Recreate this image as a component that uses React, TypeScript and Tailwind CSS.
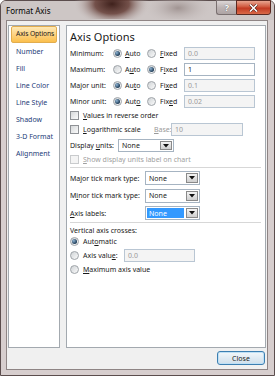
import React from "react";

function Radio({ checked = false }: { checked?: boolean }) {
  return (
    <div className="w-[9px] h-[9px] shrink-0 rounded-full border border-[#9ea3a8] bg-[linear-gradient(135deg,#cfd3d6,#fbfbfb)] flex items-center justify-center">
      {checked && (
        <div className="w-[5px] h-[5px] rounded-full bg-[radial-gradient(circle_at_35%_35%,#8fb4d4,#1c3a55_70%)]" />
      )}
    </div>
  );
}

function Check({ disabled = false }: { disabled?: boolean }) {
  return (
    <div
      className={
        disabled
          ? "w-[9px] h-[9px] shrink-0 border border-[#c9cbcd] bg-[#f4f4f4]"
          : "w-[9px] h-[9px] shrink-0 border border-[#8f9296] bg-[linear-gradient(135deg,#d6d8da,#fbfbfb)]"
      }
    />
  );
}

function TextBox({ value, disabled = false, w }: { value: string; disabled?: boolean; w: string }) {
  return (
    <div
      className={
        (disabled
          ? "bg-[#f4f4f4] text-[#9a9a9a] border-[#b9c6d3] "
          : "bg-white text-[#1a1a1a] border-[#a6b4c2] ") +
        w +
        " h-[13px] shrink-0 border flex items-center pl-[3px]"
      }
    >
      {value}
    </div>
  );
}

function Select({ w, h, highlight = false }: { w: string; h: string; highlight?: boolean }) {
  return (
    <div className={w + " " + h + " shrink-0 flex border border-[#a6b4c2] bg-white"}>
      <div
        className={
          highlight
            ? "flex-1 flex items-center pl-[2px] m-[1px] bg-[#3399ff] text-white"
            : "flex-1 flex items-center pl-[3px]"
        }
      >
        None
      </div>
      <div className="w-[12px] m-[1px] border border-[#8a8a8a] bg-[linear-gradient(#f4f4f4,#cfcfcf)] flex items-center justify-center">
        <svg width="6" height="4" viewBox="0 0 6 4">
          <path d="M0 0 L6 0 L3 3.5 Z" fill="#111" />
        </svg>
      </div>
    </div>
  );
}

function Sep() {
  return <div className="h-[2px] mr-[4px] border-t border-[#d7d7d7] border-b border-b-white" />;
}

function AutoFixedRow({
  label,
  fixed,
  value,
  au,
  fx,
}: {
  label: string;
  fixed: boolean;
  value: string;
  au: [string, string, string];
  fx: [string, string, string];
}) {
  return (
    <div className="h-[16px] flex items-center whitespace-nowrap">
      <div className="w-[43px]">{label}</div>
      <div className="w-[34px] flex items-center gap-[3px]">
        <Radio checked={!fixed} />
        <span>
          {au[0]}
          <u>{au[1]}</u>
          {au[2]}
        </span>
      </div>
      <div className="w-[37px] flex items-center gap-[4px]">
        <Radio checked={fixed} />
        <span>
          {fx[0]}
          <u>{fx[1]}</u>
          {fx[2]}
        </span>
      </div>
      <TextBox value={value} disabled={!fixed} w="w-[71px]" />
    </div>
  );
}

function GlassBlur() {
  return (
    <svg width="166" height="19" viewBox="0 0 166 19" className="shrink-0 -mt-[1px]">
      <defs>
        <radialGradient id="blobDark" cx="0.5" cy="0.5" r="0.5">
          <stop offset="0" stopColor="#3f211c" stopOpacity="1" />
          <stop offset="0.45" stopColor="#6a443d" stopOpacity="0.9" />
          <stop offset="1" stopColor="#c9c1c0" stopOpacity="0" />
        </radialGradient>
        <radialGradient id="blobGray" cx="0.5" cy="0.5" r="0.5">
          <stop offset="0" stopColor="#9b8e8c" stopOpacity="0.9" />
          <stop offset="1" stopColor="#c9c1c0" stopOpacity="0" />
        </radialGradient>
      </defs>
      <ellipse cx="128" cy="8" rx="34" ry="16" fill="url(#blobGray)" />
      <ellipse cx="62" cy="4" rx="38" ry="22" fill="url(#blobDark)" />
    </svg>
  );
}

const navItems = ["Axis Options", "Number", "Fill", "Line Color", "Line Style", "Shadow", "3-D Format", "Alignment"];

export default function App() {
  return (
    <div className="w-[275px] h-[376px] overflow-hidden bg-white">
      <div className="w-[275px] h-[376px] flex flex-col rounded-t-[6px] border border-[#5b4d4d] pl-[5px] pr-[6px] pb-[5px] font-['Noto_Sans',sans-serif] text-[7px] leading-none text-[#1a1a1a] whitespace-nowrap bg-[#d7cece]">
        <div className="h-[19px] flex items-start bg-[#cdc6c5] -ml-[5px] -mr-[6px] pl-[5px] pr-[6px] rounded-t-[5px]">
          <div className="pt-[6px] text-[8px] text-black w-[46px]">Format Axis</div>
          <GlassBlur />
          <div className="ml-auto -mt-[1px] -mr-[3px] flex">
            <div className="w-[20px] h-[15px] rounded-bl-[3px] border border-[#7a7070] border-r-0 bg-[linear-gradient(#dcd6d6,#bdb4b4_50%,#aea4a4)] flex items-center justify-center text-[9px] font-bold text-white [text-shadow:0_0_1px_#444]">
              ?
            </div>
            <div className="w-[35px] h-[15px] rounded-br-[3px] border border-[#5b2a22] bg-[linear-gradient(#e9a590,#d0583e_45%,#c23a22_55%,#d96a48)] flex items-center justify-center">
              <svg width="9" height="8" viewBox="0 0 9 8">
                <path d="M1 0.5 L8 7.5 M8 0.5 L1 7.5" stroke="#4a1a12" strokeWidth="2.6" />
                <path d="M1 0.5 L8 7.5 M8 0.5 L1 7.5" stroke="#ffffff" strokeWidth="1.6" />
              </svg>
            </div>
          </div>
        </div>
        <div className="flex-1 flex flex-col border border-[#8f8585] bg-[#f0f0f0]">
          <div className="h-[327px] flex pt-[4px] px-[1px] gap-[6px]">
            <div className="w-[52px] border border-[#a3a9af] bg-white">
              {navItems.map((n, i) =>
                i === 0 ? (
                  <div
                    key={n}
                    className="mx-[2px] h-[17px] rounded-[2px] border border-[#e2ad4e] bg-[linear-gradient(#fee9b6,#fdd588_45%,#fbbf4c)] flex items-center pl-[4px] text-[#1a1a1a] text-[6.7px] tracking-[-0.1px]"
                  >
                    {n}
                  </div>
                ) : (
                  <div key={n} className="h-[17px] flex items-center pl-[7px] text-[#1d3c78]">
                    {n}
                  </div>
                )
              )}
            </div>
            <div className="w-[200px] border border-[#a3a9af] bg-white pl-[3px] flex flex-col">
              <div className="h-[19px] flex items-center text-[11px] pt-[2px]">Axis Options</div>
              <AutoFixedRow label="Minimum:" fixed={false} value="0.0" au={["", "A", "uto"]} fx={["", "F", "ixed"]} />
              <AutoFixedRow label="Maximum:" fixed={true} value="1" au={["A", "u", "to"]} fx={["F", "i", "xed"]} />
              <AutoFixedRow label="Major unit:" fixed={false} value="0.1" au={["Au", "t", "o"]} fx={["Fi", "x", "ed"]} />
              <AutoFixedRow label="Minor unit:" fixed={false} value="0.02" au={["Aut", "o", ""]} fx={["Fix", "e", "d"]} />
              <div className="h-[12px] flex items-center gap-[4px]">
                <Check />
                <span>
                  <u>V</u>alues in reverse order
                </span>
              </div>
              <div className="h-[17px] flex items-center">
                <div className="w-[84px] flex items-center gap-[4px]">
                  <Check />
                  <span>
                    <u>L</u>ogarithmic scale
                  </span>
                </div>
                <div className="w-[17px] text-[#9a9a9a]">
                  <u>B</u>ase:
                </div>
                <TextBox value="10" disabled w="w-[72px]" />
              </div>
              <div className="h-[15px] flex items-center">
                <div className="w-[48px]">
                  Display <u>u</u>nits:
                </div>
                <Select w="w-[56px]" h="h-[13px]" />
              </div>
              <div className="h-[12px] flex items-center gap-[4px] text-[#a0a0a0]">
                <Check disabled />
                <span>
                  <u>S</u>how display units label on chart
                </span>
              </div>
              <div className="h-[2px]" />
              <Sep />
              <div className="h-[18px] flex items-center">
                <div className="w-[75px]">
                  Ma<u>j</u>or tick mark type:
                </div>
                <Select w="w-[55px]" h="h-[14px]" />
              </div>
              <div className="h-[17px] flex items-center">
                <div className="w-[75px]">
                  M<u>i</u>nor tick mark type:
                </div>
                <Select w="w-[55px]" h="h-[14px]" />
              </div>
              <div className="h-[18px] flex items-center">
                <div className="w-[75px]">
                  <u>A</u>xis labels:
                </div>
                <Select w="w-[55px]" h="h-[14px]" highlight />
              </div>
              <Sep />
              <div className="h-[12px] flex items-center">Vertical axis crosses:</div>
              <div className="h-[11px] flex items-center gap-[4px]">
                <Radio checked />
                <span>
                  Aut<u>o</u>matic
                </span>
              </div>
              <div className="h-[17px] flex items-center">
                <div className="w-[54px] flex items-center gap-[4px]">
                  <Radio />
                  <span>
                    Axis valu<u>e</u>:
                  </span>
                </div>
                <TextBox value="0.0" disabled w="w-[71px]" />
              </div>
              <div className="h-[11px] flex items-center gap-[4px]">
                <Radio />
                <span>
                  <u>M</u>aximum axis value
                </span>
              </div>
            </div>
          </div>
          <div className="flex-1 flex justify-end items-start pt-[3px] pr-[2px]">
            <div className="w-[48px] h-[14px] rounded-[3px] border border-[#3c7fb1] bg-[linear-gradient(#f3f8fb,#e0ebf3_50%,#cfdfea)] shadow-[inset_0_0_0_1px_#bfe0f5] flex items-center justify-center">
              Close
            </div>
          </div>
        </div>
      </div>
    </div>
  );
}
